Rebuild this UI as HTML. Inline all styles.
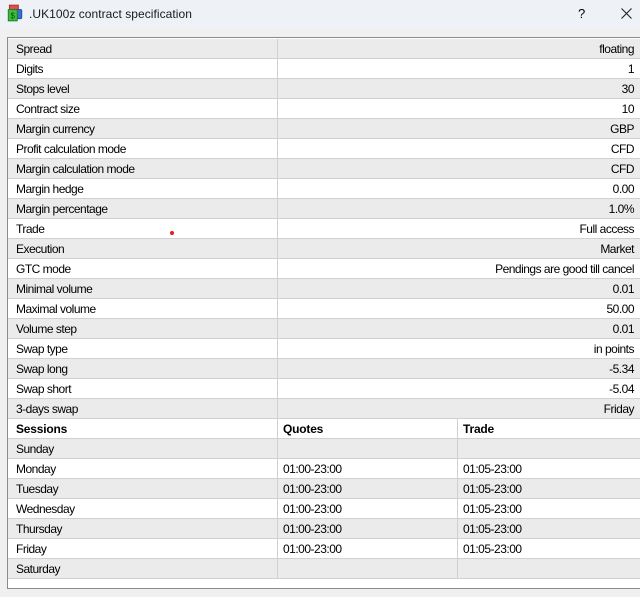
<!DOCTYPE html>
<html><head><meta charset="utf-8"><style>
*{margin:0;padding:0;box-sizing:border-box}
body{width:640px;height:597px;overflow:hidden;background:#f0f0f0;font-family:"Liberation Sans",sans-serif;font-size:12px;color:#000;position:relative}
.title{position:absolute;left:0;top:0;width:640px;height:28px;background:#eef2f7}
.title .t{position:absolute;left:29px;top:7px;font-size:12px;color:#1a1a1a;letter-spacing:0.05px}
.box{position:absolute;left:7px;top:37px;width:640px;height:552px;border:1px solid #8a8a8a;border-right:none;background:#fff}
.row{position:absolute;left:8px;width:640px;height:20px;border-bottom:1px solid #d0d0d0;letter-spacing:-0.5px}
.row span{position:absolute;top:3px}
.g{background:#ebebeb}
.c1{left:8px}
.d1{position:absolute;left:269px;top:0;width:1px;height:19px;background:#d0d0d0}
.d2{position:absolute;left:449px;top:0;width:1px;height:19px;background:#d0d0d0}
.b{font-weight:bold;letter-spacing:-0.2px}
</style></head><body>
<div class="title">
<svg style="position:absolute;left:6px;top:4px" width="18" height="18" viewBox="0 0 16 16">
<rect x="3" y="1" width="8" height="5" fill="#e05050" stroke="#a03030" stroke-width="0.8"/>
<rect x="9" y="5" width="5" height="8" rx="1" fill="#3a70d0" stroke="#1f4a9a" stroke-width="0.8"/>
<rect x="2" y="5" width="8" height="10" fill="#3cbf3c" stroke="#1e7a1e" stroke-width="0.8"/>
<text x="4" y="13" font-size="7" fill="#0a4a0a" font-family="Liberation Sans">$</text>
</svg>
<span class="t">.UK100z contract specification</span>
<span style="position:absolute;left:578px;top:6px;font-size:13px">?</span>
<svg style="position:absolute;left:621px;top:8px" width="11" height="11" viewBox="0 0 11 11"><path d="M0.5 0.5L10.5 10.5M10.5 0.5L0.5 10.5" stroke="#222" stroke-width="1.1"/></svg>
</div>
<div class="box"></div>
<div id="t"></div>
<div style="position:absolute;left:170px;top:231px;width:4px;height:4px;border-radius:2px;background:#e02020"></div>
<script>
var spec=[["Spread","floating"],["Digits","1"],["Stops level","30"],["Contract size","10"],["Margin currency","GBP"],["Profit calculation mode","CFD"],["Margin calculation mode","CFD"],["Margin hedge","0.00"],["Margin percentage","1.0%"],["Trade","Full access"],["Execution","Market"],["GTC mode","Pendings are good till cancel"],["Minimal volume","0.01"],["Maximal volume","50.00"],["Volume step","0.01"],["Swap type","in points"],["Swap long","-5.34"],["Swap short","-5.04"],["3-days swap","Friday"]];
var h="";
spec.forEach(function(r,i){h+='<div class="row'+(i%2==0?' g':'')+'" style="top:'+(39+20*i)+'px"><span class="c1">'+r[0]+'</span><div class="d1"></div><span style="right:14px">'+r[1]+'</span></div>';});
var i=19;
h+='<div class="row" style="top:'+(39+20*i)+'px"><span class="c1 b">Sessions</span><div class="d1"></div><span class="b" style="left:275px">Quotes</span><div class="d2"></div><span class="b" style="left:455px">Trade</span></div>';
var days=["Sunday","Monday","Tuesday","Wednesday","Thursday","Friday","Saturday"];
days.forEach(function(d,j){var k=20+j;var q=(j>0&&j<6);h+='<div class="row'+(k%2==0?' g':'')+'" style="top:'+(39+20*k)+'px"><span class="c1">'+d+'</span><div class="d1"></div><span style="left:275px">'+(q?'01:00-23:00':'')+'</span><div class="d2"></div><span style="left:455px">'+(q?'01:05-23:00':'')+'</span></div>';});
document.getElementById("t").innerHTML=h;
</script>
</body></html>
